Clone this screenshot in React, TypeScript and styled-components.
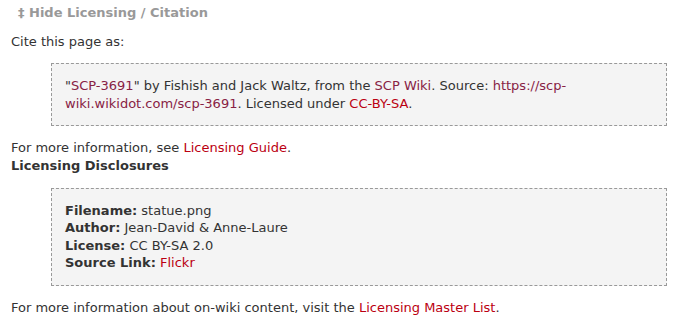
import styled, { createGlobalStyle } from "styled-components";

const GlobalStyle = createGlobalStyle`
  body {
    margin: 0;
    background: #fff;
    color: #333;
    font-family: "DejaVu Sans", Verdana, sans-serif;
    font-size: 13px;
    line-height: 17.6px;
  }
`;

type Disclosure = {
  label: string;
  value: string;
  link?: boolean;
};

const disclosures: Disclosure[] = [
  { label: "Filename", value: "statue.png" },
  { label: "Author", value: "Jean-David & Anne-Laure" },
  { label: "License", value: "CC BY-SA 2.0" },
  { label: "Source Link", value: "Flickr", link: true },
];

export default function App() {
  return (
    <>
      <GlobalStyle />
      <Page>
        <Toggle href="#">‡ Hide Licensing / Citation</Toggle>
        <Section>
          <Paragraph>Cite this page as:</Paragraph>
          <Quote>
            "<Link $visited href="#">SCP-3691</Link>" by Fishish and Jack Waltz,
            from the <Link $visited href="#">SCP Wiki</Link>. Source:{" "}
            <Link $visited href="#">
              https://scp-wiki.wikidot.com/scp-3691
            </Link>
            . Licensed under <Link href="#">CC-BY-SA</Link>.
          </Quote>
          <Paragraph>
            For more information, see <Link href="#">Licensing Guide</Link>.
          </Paragraph>
          <Heading>Licensing Disclosures</Heading>
          <Quote>
            {disclosures.map(({ label, value, link }) => (
              <Row key={label}>
                <strong>{label}:</strong>{" "}
                {link ? <Link href="#">{value}</Link> : value}
              </Row>
            ))}
          </Quote>
          <Paragraph>
            For more information about on-wiki content, visit the{" "}
            <Link href="#">Licensing Master List</Link>.
          </Paragraph>
        </Section>
      </Page>
    </>
  );
}

const Page = styled.div`
  padding: 4px 11px 0 11px;
`;

const Toggle = styled.a`
  display: block;
  padding-left: 7px;
  color: #999;
  font-weight: bold;
  text-decoration: none;
`;

const Section = styled.div`
  padding-top: 11px;
`;

const Paragraph = styled.p`
  margin: 0;
`;

const Heading = styled.p`
  margin: 0;
  font-weight: bold;
`;

const Quote = styled.div`
  margin: 13px 22px 13px 40px;
  padding: 13px;
  border: 1px dashed #999;
  background: #f4f4f4;
`;

const Row = styled.div``;

const Link = styled.a<{ $visited?: boolean }>`
  color: ${({ $visited }) => ($visited ? "#824" : "#b01")};
  text-decoration: none;
`;
